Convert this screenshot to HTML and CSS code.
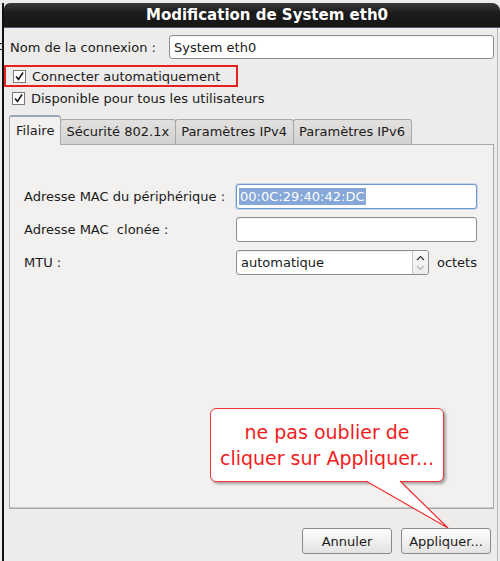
FILE: index.html
```html
<!DOCTYPE html>
<html lang="fr">
<head>
<meta charset="utf-8">
<link rel="stylesheet" href="styles.css">
</head>
<body>
<div class="desktop">
  <span class="behind">c</span>
  <div class="window">
    <div class="titlebar">Modification de System eth0</div>
    <div class="body">
      <div class="namerow">
        <span class="lbl">Nom de la connexion :</span>
        <div class="entry name">System eth0</div>
      </div>
      <div class="check highlight"><span class="box"><svg viewBox="0 0 13 13" width="13" height="13"><path d="M3 6.5 L5.5 9.5 L10 2.5" fill="none" stroke="#1a1a1a" stroke-width="1.6"/></svg></span>Connecter automatiquement</div>
      <div class="check"><span class="box"><svg viewBox="0 0 13 13" width="13" height="13"><path d="M3 6.5 L5.5 9.5 L10 2.5" fill="none" stroke="#1a1a1a" stroke-width="1.6"/></svg></span>Disponible pour tous les utilisateurs</div>
      <div class="tabs">
        <div class="tab active">Filaire</div>
        <div class="tab">Sécurité 802.1x</div>
        <div class="tab">Paramètres IPv4</div>
        <div class="tab">Paramètres IPv6</div>
      </div>
      <div class="panel">
        <div class="form">
          <span class="lbl">Adresse MAC du périphérique :</span>
          <div class="entry focus"><span class="sel">00:0C:29:40:42:DC</span></div>
          <span class="lbl">Adresse MAC&nbsp; clonée :</span>
          <div class="entry"></div>
          <span class="lbl">MTU :</span>
          <div class="spinrow">
            <div class="entry spin"><span class="val">automatique</span><span class="arrows"><svg viewBox="0 0 15 24" width="15" height="24"><path d="M4 9 L7.5 5.5 L11 9" fill="none" stroke="#333" stroke-width="1.2"/><path d="M4 15 L7.5 18.5 L11 15" fill="none" stroke="#b5b5b5" stroke-width="1.2"/></svg></span></div>
            <span class="unit">octets</span>
          </div>
        </div>
      </div>
      <div class="buttons">
        <div class="btn">Annuler</div>
        <div class="btn">Appliquer...</div>
      </div>
    </div>
  </div>
  <div class="callout">ne pas oublier de<br>cliquer sur Appliquer...</div>
  <svg class="tail" width="90" height="60" viewBox="0 0 90 60"><path d="M0 1 L34 1 L82 48 Z" fill="#fff" stroke="none"/><path d="M0 1 L82 48 L34 1" fill="none" stroke="#f03030" stroke-width="1.2"/></svg>
</div>
</body>
</html>
```

FILE: styles.css
```css
html, body {
  margin: 0;
  padding: 0;
  background: #edeceb;
  width: 500px;
  height: 561px;
  overflow: hidden;
}
.desktop {
  position: relative;
  width: 500px;
  height: 561px;
  padding: 3px 0 0 2px;
  box-sizing: border-box;
  font-family: "DejaVu Sans", sans-serif;
  font-size: 13px;
  color: #1a1a1a;
}
.behind {
  position: absolute;
  left: -3px;
  top: 38px;
  font-size: 13px;
}
.window {
  width: 498px;
  height: 558px;
  border-left: 2px solid #111;
  box-sizing: border-box;
  display: flex;
  flex-direction: column;
  background: #edeceb;
}
.titlebar {
  height: 25px;
  background: linear-gradient(#3a3a3a, #1c1c1c 40%, #161616);
  border-radius: 6px 8px 0 0;
  border-bottom: 1px solid #4c5a6a;
  color: #fff;
  font-weight: bold;
  font-size: 15px;
  line-height: 25px;
  text-align: center;
  padding-left: 30px;
  box-sizing: border-box;
}
.body {
  flex: 1;
  display: flex;
  flex-direction: column;
  padding: 7px 0 0 0;
  border-right: 1px solid #b8b8b8;
  margin-right: 2px;
}
.namerow {
  display: flex;
  align-items: center;
  padding-left: 6px;
}
.entry {
  background: #fff;
  border: 1px solid #8e8e8e;
  border-radius: 3px;
  height: 24px;
  box-sizing: border-box;
  display: flex;
  align-items: center;
  padding-left: 4px;
  box-shadow: inset 0 1px 1px rgba(0,0,0,0.06);
}
.entry.name {
  width: 325px;
  margin-left: auto;
  margin-right: 3px;
}
.check {
  display: flex;
  align-items: center;
  height: 18px;
  border: 2px solid transparent;
  padding-left: 6px;
  align-self: flex-start;
}
.check.highlight {
  border-color: #e8211e;
  margin-top: 6px;
  width: 223px;
  margin-left: 0;
  padding-left: 7px;
}
.check .box {
  width: 11px;
  height: 11px;
  border: 1px solid #7a7a7a;
  background: #fff;
  margin-right: 6px;
  display: flex;
  align-items: center;
  justify-content: center;
  overflow: hidden;
}
.check .box svg {
  flex: none;
}
.tabs {
  display: flex;
  align-items: flex-end;
  margin-left: 5px;
  margin-top: 5px;
  height: 30px;
}
.tab {
  height: 25px;
  line-height: 24px;
  padding: 0 6px 0 5px;
  border: 1px solid #a8a8a8;
  border-bottom: none;
  border-radius: 3px 3px 0 0;
  background: linear-gradient(#e2e1e0, #d3d2d1);
  box-sizing: border-box;
  margin-right: -1px;
}
.tab.active {
  height: 30px;
  line-height: 27px;
  background: #f2f1f0;
  border-top: 2px solid #6d8bbd;
  border-color: #9aa7bb #a8a8a8 #a8a8a8;
  position: relative;
  z-index: 1;
  margin-bottom: -1px;
  padding: 0 6px 0 6px;
}
.panel {
  margin-left: 5px;
  width: 485px;
  height: 365px;
  border: 1px solid #a8a8a8;
  background: #f2f1f0;
  box-sizing: border-box;
  padding: 39px 0 0 14px;
  box-shadow: inset 0 -1px 0 #c9c9c9;
}
.form {
  display: grid;
  grid-template-columns: 212px 241px;
  row-gap: 8px;
  align-items: center;
}
.form .entry {
  height: 25px;
}
.entry.focus {
  border-color: #6f95cc;
  box-shadow: 0 0 0 1px rgba(120,160,220,0.35);
  padding-left: 2px;
}
.sel {
  background: #86a8d8;
  color: #fff;
  line-height: 17px;
  padding: 0 1px;
}
.spinrow {
  display: flex;
  align-items: center;
}
.entry.spin {
  width: 196px;
  padding-right: 0;
  justify-content: space-between;
}
.arrows {
  width: 15px;
  height: 23px;
  border-left: 1px solid #c4c4c4;
  display: flex;
  align-items: center;
  justify-content: center;
  overflow: hidden;
  border-radius: 0 3px 3px 0;
  background: linear-gradient(#fafafa, #ebebeb);
}
.unit {
  margin-left: 8px;
}
.buttons {
  display: flex;
  justify-content: flex-end;
  gap: 9px;
  margin-top: 19px;
  padding-right: 6px;
}
.btn {
  width: 90px;
  height: 26px;
  box-sizing: border-box;
  border: 1px solid #8a8a8a;
  border-radius: 3px;
  background: linear-gradient(#fdfdfd, #e4e3e2);
  display: flex;
  align-items: center;
  justify-content: center;
}
.callout {
  position: absolute;
  left: 210px;
  top: 408px;
  width: 234px;
  height: 74px;
  box-sizing: border-box;
  background: #fff;
  border: 1px solid #f03838;
  border-radius: 6px;
  box-shadow: 2px 2px 3px rgba(0,0,0,0.35);
  color: #f21c1c;
  font-family: "DejaVu Sans", sans-serif;
  font-size: 19px;
  line-height: 26px;
  text-align: center;
  padding-top: 10px;
}
.tail {
  position: absolute;
  left: 366px;
  top: 480px;
  overflow: visible;
}
```
